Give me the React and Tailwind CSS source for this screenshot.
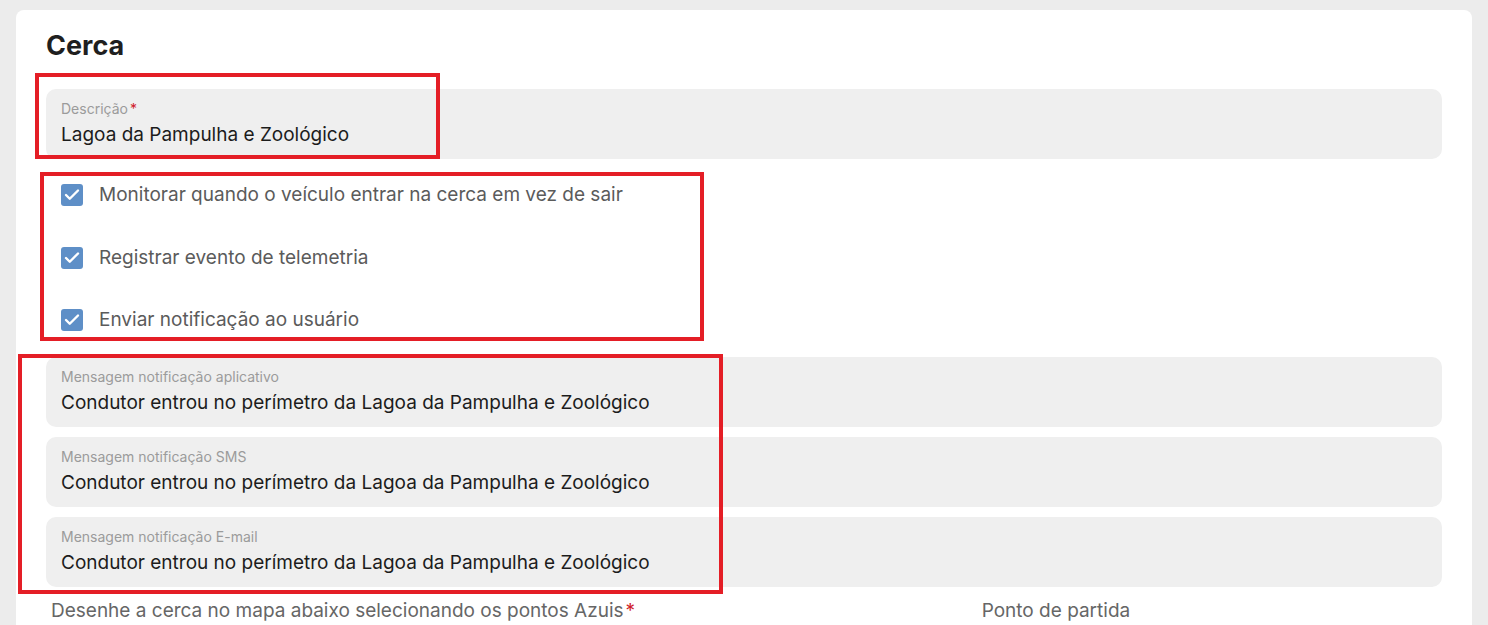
import { Check } from "lucide-react";

const font = { fontFamily: "Inter, 'Liberation Sans', sans-serif" };

function Field({ label, value, required }) {
  return (
    <div className="h-[70px] rounded-[10px] bg-[#efefef] px-[15px] pt-[11px]">
      <div className="text-[14px] leading-[17px] text-[#9b9b9b]">
        {label}
        {required && <span className="text-[#d0202a] ml-[2px]">*</span>}
      </div>
      <div className="mt-[6px] text-[19px] leading-[24px] text-[#1c1c1c]">{value}</div>
    </div>
  );
}

function CheckRow({ text }) {
  return (
    <div className="flex items-center h-[40px] pl-[15px]">
      <span className="flex items-center justify-center w-[22px] h-[22px] rounded-[3px] bg-[#5e8fc7]">
        <Check size={18} strokeWidth={3.2} color="#ffffff" />
      </span>
      <span className="ml-[16px] text-[19px] leading-[24px] text-[#5b5b5b]">{text}</span>
    </div>
  );
}

export default function App() {
  const msg = "Condutor entrou no perímetro da Lagoa da Pampulha e Zoológico";

  return (
    <div className="relative w-full h-[625px] overflow-hidden bg-[#ececec]" style={font}>
      <div className="mx-[16px] mt-[10px] rounded-t-[8px] bg-white px-[30px] pt-[18px] h-[700px]">
        <h1 className="text-[27px] leading-[36px] font-bold text-[#1f1f1f]">Cerca</h1>

        <div className="mt-[25px]">
          <Field label="Descrição" value="Lagoa da Pampulha e Zoológico" required />
        </div>

        <div className="mt-[16px] flex flex-col gap-[22.5px]">
          <CheckRow text="Monitorar quando o veículo entrar na cerca em vez de sair" />
          <CheckRow text="Registrar evento de telemetria" />
          <CheckRow text="Enviar notificação ao usuário" />
        </div>

        <div className="mt-[17px] flex flex-col gap-[10px]">
          <Field label="Mensagem notificação aplicativo" value={msg} />
          <Field label="Mensagem notificação SMS" value={msg} />
          <Field label="Mensagem notificação E-mail" value={msg} />
        </div>

        <div className="mt-[12px] grid grid-cols-3 text-[19px] leading-[24px] text-[#666666]">
          <div className="col-span-2 pl-[5px]">
            Desenhe a cerca no mapa abaixo selecionando os pontos Azuis
            <span className="text-[#d0202a] ml-[2px]">*</span>
          </div>
          <div className="pl-[5px]">Ponto de partida</div>
        </div>
      </div>

      {/* annotation boxes */}
      <div className="absolute pointer-events-none left-[35px] top-[73px] w-[405px] h-[86px] border-4 border-[#e41e26]" />
      <div className="absolute pointer-events-none left-[40px] top-[172px] w-[664px] h-[169px] border-4 border-[#e41e26]" />
      <div className="absolute pointer-events-none left-[18px] top-[354px] w-[705px] h-[240px] border-4 border-[#e41e26]" />
    </div>
  );
}
